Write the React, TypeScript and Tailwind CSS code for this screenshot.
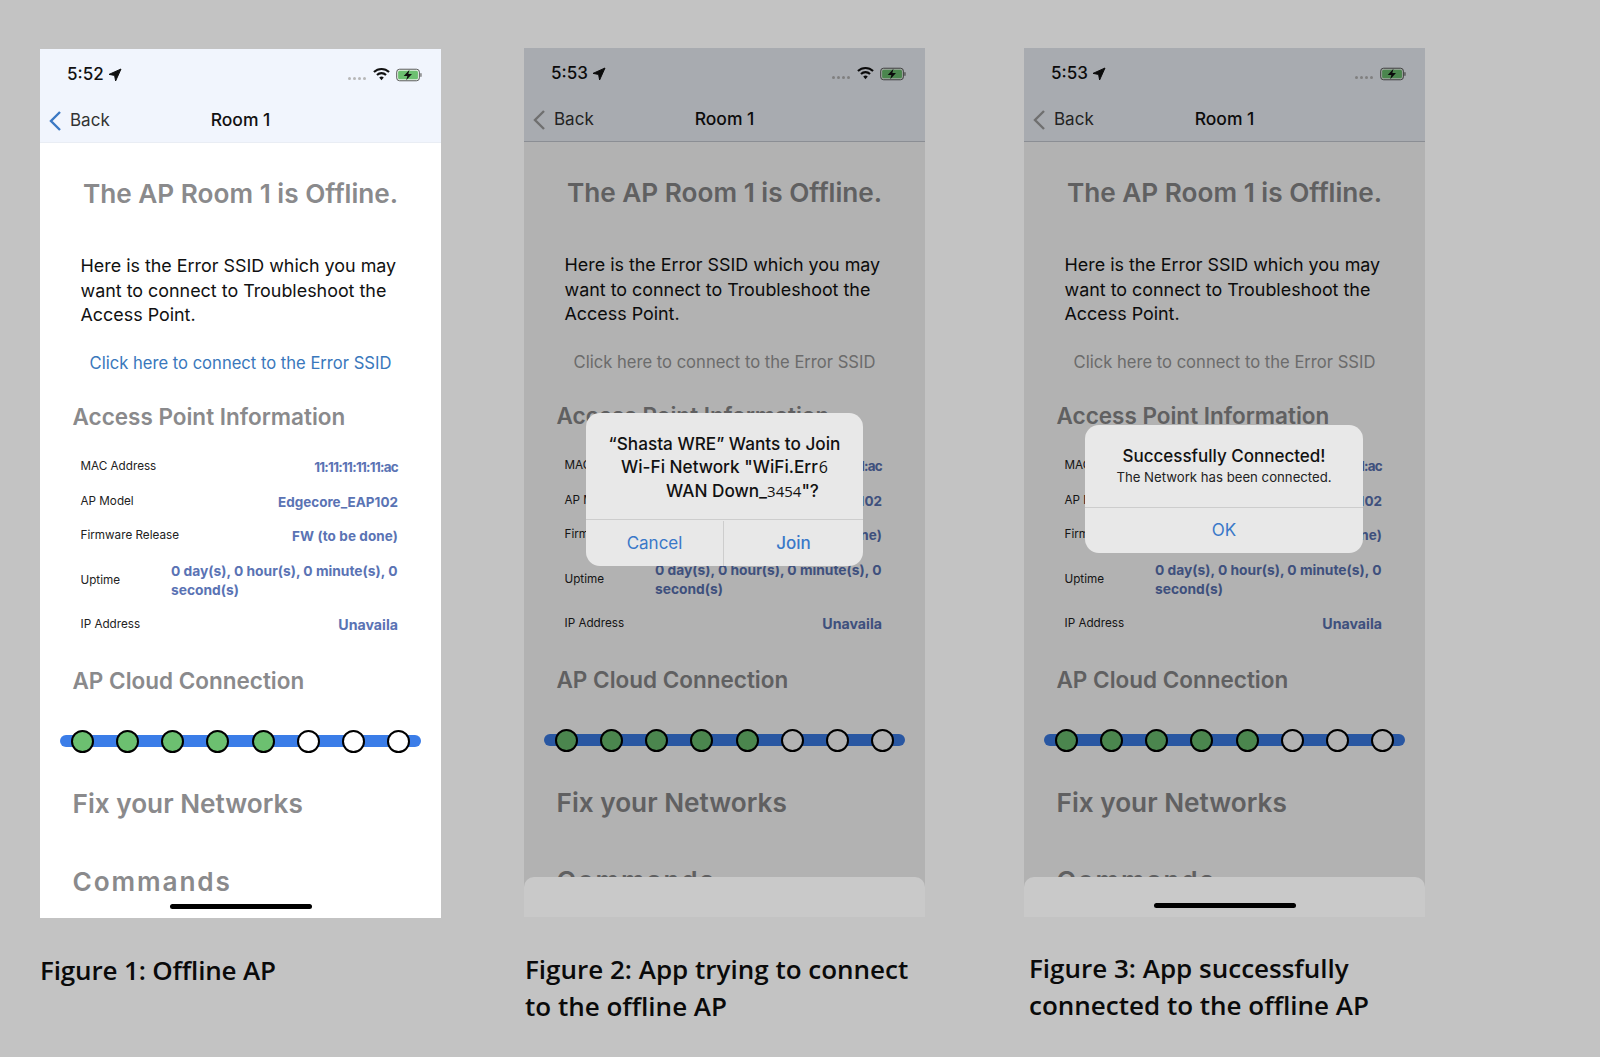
const poppins = "font-['Inter','Liberation_Sans',sans-serif]";
const sf = "font-['Inter','Liberation_Sans',sans-serif]";

const rows = [
  { label: 'MAC Address', value: '11:11:11:11:11:ac', spacing: 'tracking-[-0.75px]' },
  { label: 'AP Model', value: 'Edgecore_EAP102', spacing: 'tracking-[0px]' },
  { label: 'Firmware Release', value: 'FW (to be done)', spacing: 'tracking-[0.1px]' },
];

const LocationArrow = () => (
  <svg className="w-[14px] h-[14px] ml-[4px]" viewBox="0 0 14 14">
    <path d="M13 1 L1 6.4 L6.6 7.4 L7.6 13 Z" fill="#111" stroke="#111" strokeWidth="1" strokeLinejoin="round" />
  </svg>
);

const Wifi = () => (
  <svg className="w-[17px] h-[14px] mr-[6px] mb-[2px]" viewBox="0 0 18 14">
    <path d="M1 5 A11.5 11.5 0 0 1 17 5" fill="none" stroke="#111" strokeWidth="2.2" />
    <path d="M4.2 8 A7 7 0 0 1 13.8 8" fill="none" stroke="#111" strokeWidth="2.2" />
    <path d="M9 13.5 L6.6 10.8 A3.4 3.4 0 0 1 11.4 10.8 Z" fill="#111" />
  </svg>
);

const Battery = () => (
  <svg className="w-[26px] h-[14px] mb-[1px]" viewBox="0 0 27 14">
    <rect x="0.7" y="1" width="23.6" height="12" rx="3" fill="#e8f3ea" stroke="#555" strokeWidth="1" />
    <rect x="2.2" y="2.5" width="20.6" height="9" rx="1.6" fill="#6cc070" />
    <rect x="25.2" y="5" width="1.4" height="4" rx="0.7" fill="#777" />
    <path d="M14 1.5 L8 8 L11.8 8 L10.6 12.5 L16.6 6 L12.8 6 Z" fill="#111" />
  </svg>
);

const Chevron = ({ color }: { color: string }) => (
  <svg className="w-[14px] h-[22px]" viewBox="0 0 14 22">
    <path d="M12 2 L3 11 L12 20" fill="none" stroke={color} strokeWidth="2.4" />
  </svg>
);

const Heading = ({ children, large, spacing }: { children: string; large?: boolean; spacing?: string }) => (
  <h2
    className={`${poppins} font-semibold text-[#8a8a8c] pl-[32.5px] ${
      large ? 'text-[26.2px] h-[36px] leading-[36px]' : 'text-[22.5px] h-[30px] leading-[30px]'
    } ${spacing ?? ''}`}
  >
    {children}
  </h2>
);

const Phone = ({
  time,
  dimmed,
  wifi,
  sheet,
  indicator,
  children,
}: {
  time: string;
  dimmed?: boolean;
  wifi?: boolean;
  sheet?: boolean;
  indicator?: boolean;
  children?: React.ReactNode;
}) => (
  <div className="relative w-[401px] h-[869px] bg-white overflow-hidden">
    <div className={`h-[94px] bg-[#f1f5fd] border-b ${dimmed ? 'border-[#c8ccd4]' : 'border-[#e9edf4]'}`}>
      <div className={`${sf} h-[50px] flex items-center pl-[27px] pr-[19px] pt-[2px] text-[#111]`}>
        <span className="text-[17px] font-medium">{time}</span>
        <LocationArrow />
        <div className="flex-1" />
        <div className="flex gap-[2px] mr-[7px] mt-[7px]">
          <span className="w-[3px] h-[3px] bg-[#b8b8b8] rounded-full" />
          <span className="w-[3px] h-[3px] bg-[#b8b8b8] rounded-full" />
          <span className="w-[3px] h-[3px] bg-[#b8b8b8] rounded-full" />
          <span className="w-[3px] h-[3px] bg-[#b8b8b8] rounded-full" />
        </div>
        {wifi && <Wifi />}
        <Battery />
      </div>
      <div className={`${sf} relative h-[43px] flex items-center justify-center text-[17.5px] text-[#111]`}>
        <div className="absolute left-[8px] top-[9px] flex items-center gap-[8px] font-normal">
          <Chevron color={dimmed ? '#a0a0a0' : '#3b78c4'} />
          <span className="text-[17px] text-[#333]">Back</span>
        </div>
        <span className="font-medium">Room 1</span>
      </div>
    </div>

    <div className="pt-[31px]">
      <h1 className={`${poppins} text-center font-semibold text-[#8a8a8c] text-[26.2px] h-[40px] leading-[40px]`}>
        The AP Room 1 is Offline.
      </h1>
      <p className={`${poppins} mt-[40px] pl-[40.5px] pr-[30px] text-[17.9px] leading-[24.5px] text-[#111]`}>
        Here is the Error SSID which you may want to connect to Troubleshoot the Access Point.
      </p>
      <div
        className={`${sf} mt-[23px] text-center text-[16.6px] leading-[24px] ${dimmed ? 'text-[#9a9a9a]' : 'text-[#3a78bc]'}`}
      >
        Click here to connect to the Error SSID
      </div>
      <div className="mt-[27px]">
        <Heading>Access Point Information</Heading>
      </div>
      <div className={`${poppins} mt-[18.5px] pl-[40.5px] pr-[43px] text-[11.7px] text-[#222]`}>
        {rows.map((row) => (
          <div key={row.label} className="h-[34.5px] flex items-center justify-between">
            <span>{row.label}</span>
            <span className={`text-[13.5px] font-bold text-[#5a73b4] ${row.spacing}`}>{row.value}</span>
          </div>
        ))}
        <div className="h-[54px] flex items-center justify-between">
          <span>Uptime</span>
          <span className="w-[227px] text-[13.8px] leading-[18.5px] font-bold text-[#5a73b4]">
            0 day(s), 0 hour(s), 0 minute(s), 0 second(s)
          </span>
        </div>
        <div className="h-[34.5px] flex items-center justify-between">
          <span>IP Address</span>
          <span className="text-[14.2px] font-bold text-[#5a73b4]">Unavaila</span>
        </div>
      </div>
      <div className="mt-[24px]">
        <Heading>AP Cloud Connection</Heading>
      </div>
      <div className="mt-[39px] mx-[20px] h-[12px] rounded-full bg-[#3b7de8] flex items-center justify-between px-[11px]">
        {[0, 1, 2, 3, 4, 5, 6, 7].map((i) => (
          <span
            key={i}
            className={`shrink-0 w-[23px] h-[23px] rounded-full border-2 border-black ${
              i < 5 ? 'bg-[#6cc070]' : 'bg-white'
            }`}
          />
        ))}
      </div>
      <div className="mt-[39px]">
        <Heading large>Fix your Networks</Heading>
      </div>
      <div className="mt-[42px]">
        <Heading large spacing="tracking-[1.9px]">Commands</Heading>
      </div>
    </div>

    {dimmed && <div className="absolute inset-0 bg-black/30" />}
    {sheet && <div className="absolute left-0 right-0 bottom-0 h-[40px] bg-[#c9c9c9] rounded-t-[10px]" />}
    {indicator && (
      <div className="absolute left-[130px] bottom-[9px] w-[142px] h-[5px] rounded-full bg-black" />
    )}
    {children}
  </div>
);

const Caption = ({ children, className }: { children: React.ReactNode; className: string }) => (
  <p className={`font-['Open_Sans',sans-serif] font-semibold text-[26px] leading-[37px] text-[#0a0a0a] ${className}`}>
    {children}
  </p>
);

export default function App() {
  return (
    <div className="w-[1600px] h-[1057px] bg-[#c3c3c3] overflow-hidden flex">
      <div className="ml-[40px] mt-[49px] w-[401px]">
        <Phone time="5:52" wifi indicator />
        <Caption className="mt-[34px] tracking-[-0.15px]">Figure 1: Offline AP</Caption>
      </div>

      <div className="ml-[83px] mt-[48px] w-[401px]">
        <Phone time="5:53" wifi dimmed sheet>
          <div className={`${sf} absolute left-[62px] top-[365px] w-[277px] h-[153px] rounded-[14px] bg-[#e8e8e8] flex flex-col`}>
            <div className="h-[106px] pt-[19px] text-center text-[17.2px] leading-[23px] font-medium text-[#111]">
              <div>“Shasta WRE” Wants to Join</div>
              <div>
                Wi-Fi Network "WiFi.Err<span className="ml-[1px] font-['Open_Sans',sans-serif] font-normal text-[16px]">6</span>
              </div>
              <div className="pl-[36px]">
                WAN Down_<span className="font-['Open_Sans',sans-serif] font-normal text-[15px]">3454</span>"?
              </div>
            </div>
            <div className="flex-1 flex border-t border-[#cdcdcd] pt-[1px] text-[17px] text-[#3a78c8]">
              <div className="w-[138px] flex items-center justify-center border-r border-[#cdcdcd]">Cancel</div>
              <div className="flex-1 flex items-center justify-center font-medium">Join</div>
            </div>
          </div>
        </Phone>
        <Caption className="mt-[34px] ml-[1px]">
          Figure 2: App trying to connect
          <br />
          to the offline AP
        </Caption>
      </div>

      <div className="ml-[99px] mt-[48px] w-[401px]">
        <Phone time="5:53" dimmed sheet indicator>
          <div className={`${sf} absolute left-[61px] top-[377px] w-[278px] h-[128px] rounded-[14px] bg-[#e8e8e8] flex flex-col`}>
            <div className="h-[82px] pt-[19px] text-center text-[#111]">
              <div className="text-[17px] leading-[24px] font-medium">Successfully Connected!</div>
              <div className="text-[13.2px] leading-[19px] text-[#222]">The Network has been connected.</div>
            </div>
            <div className="flex-1 flex items-center justify-center border-t border-[#cdcdcd] pt-[1px] text-[17px] text-[#3a78c8]">
              OK
            </div>
          </div>
        </Phone>
        <Caption className="mt-[33px] ml-[5px]">
          Figure 3: App successfully
          <br />
          connected to the offline AP
        </Caption>
      </div>
    </div>
  );
}
